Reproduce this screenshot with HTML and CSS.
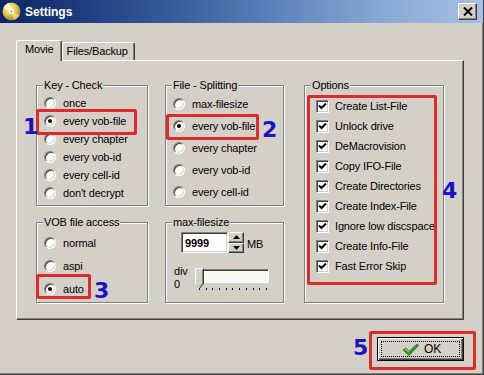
FILE: index.html
```html
<!DOCTYPE html>
<html>
<head>
<meta charset="utf-8">
<link rel="stylesheet" href="styles.css">
</head>
<body>
<div class="window">
  <div class="titlebar">
    <svg class="app-icon" width="19" height="19" viewBox="0 0 19 19">
      <defs>
        <radialGradient id="cd" cx="0.4" cy="0.35" r="0.75">
          <stop offset="0" stop-color="#fffbe0"/>
          <stop offset="0.35" stop-color="#f0d860"/>
          <stop offset="0.75" stop-color="#b89a30"/>
          <stop offset="1" stop-color="#6a6050"/>
        </radialGradient>
      </defs>
      <circle cx="9.5" cy="9.5" r="9" fill="url(#cd)"/>
      <path d="M9.5 9.5 L1.5 6 A9 9 0 0 1 7 0.8 Z" fill="#fffce8" opacity="0.75"/>
      <path d="M9.5 9.5 L17.5 13 A9 9 0 0 1 12 18.2 Z" fill="#fff2a0" opacity="0.6"/>
      <circle cx="9.5" cy="9.5" r="2.6" fill="#fff"/>
      <circle cx="9.5" cy="9.5" r="1.1" fill="#8a8a80"/>
    </svg>
    <span class="title">Settings</span>
    <div class="close">
      <svg width="10" height="9" viewBox="0 0 10 9"><path d="M1 0.5 L9 8.5 M9 0.5 L1 8.5" stroke="#000" stroke-width="2"/></svg>
    </div>
  </div>

  <div class="client">
    <div class="tabs">
      <div class="tab active">Movie</div>
      <div class="tab">Files/Backup</div>
    </div>

    <div class="panel">
      <div class="col col-1">
        <div class="group g-key">
          <div class="legend">Key - Check</div>
          <div class="rows rows-key">
            <div class="radio"><span class="rb"></span>once</div>
            <div class="radio"><span class="rb on"></span>every vob-file</div>
            <div class="radio"><span class="rb"></span>every chapter</div>
            <div class="radio"><span class="rb"></span>every vob-id</div>
            <div class="radio"><span class="rb"></span>every cell-id</div>
            <div class="radio"><span class="rb"></span>don't decrypt</div>
          </div>
        </div>
        <div class="group g-vob">
          <div class="legend">VOB file access</div>
          <div class="rows rows-vob">
            <div class="radio"><span class="rb"></span>normal</div>
            <div class="radio"><span class="rb"></span>aspi</div>
            <div class="radio"><span class="rb on"></span>auto</div>
          </div>
        </div>
      </div>

      <div class="col col-2">
        <div class="group g-split">
          <div class="legend">File - Splitting</div>
          <div class="rows rows-split">
            <div class="radio"><span class="rb"></span>max-filesize</div>
            <div class="radio"><span class="rb on"></span>every vob-file</div>
            <div class="radio"><span class="rb"></span>every chapter</div>
            <div class="radio"><span class="rb"></span>every vob-id</div>
            <div class="radio"><span class="rb"></span>every cell-id</div>
          </div>
        </div>
        <div class="group g-size">
          <div class="legend">max-filesize</div>
          <div class="size-row">
            <div class="edit">9999</div>
            <div class="spin">
              <div class="spin-btn"><svg width="7" height="4" viewBox="0 0 7 4"><path d="M3.5 0 L7 4 L0 4 Z" fill="#000"/></svg></div>
              <div class="spin-btn"><svg width="7" height="4" viewBox="0 0 7 4"><path d="M0 0 L7 0 L3.5 4 Z" fill="#000"/></svg></div>
            </div>
            <span class="unit">MB</span>
          </div>
          <div class="slider-row">
            <div class="slider-labels"><span>div</span><span>0</span></div>
            <div class="slider">
              <div class="track"></div>
              <svg class="thumb" width="9" height="21" viewBox="0 0 9 21">
                <path d="M0.5 0.5 H8.5 V16 L4.5 20.5 L0.5 16 Z" fill="#d4d0c8"/>
                <path d="M0.5 16 V0.5 H8" stroke="#fff" fill="none"/>
                <path d="M8.5 0.5 V16 L4.5 20.5" stroke="#404040" fill="none"/>
                <path d="M7.5 1.5 V15.5 L4.5 19" stroke="#808080" fill="none"/>
              </svg>
              <div class="ticks"></div>
            </div>
          </div>
        </div>
      </div>

      <div class="col col-3">
        <div class="group g-opt">
          <div class="legend">Options</div>
          <div class="rows rows-opt">
            <div class="check"><span class="cb"><svg width="9" height="9" viewBox="0 0 9 9"><path d="M1 3.5 L3.5 6 L8 1.5" stroke="#000" stroke-width="2" fill="none"/></svg></span>Create List-File</div>
            <div class="check"><span class="cb"><svg width="9" height="9" viewBox="0 0 9 9"><path d="M1 3.5 L3.5 6 L8 1.5" stroke="#000" stroke-width="2" fill="none"/></svg></span>Unlock drive</div>
            <div class="check"><span class="cb"><svg width="9" height="9" viewBox="0 0 9 9"><path d="M1 3.5 L3.5 6 L8 1.5" stroke="#000" stroke-width="2" fill="none"/></svg></span>DeMacrovision</div>
            <div class="check"><span class="cb"><svg width="9" height="9" viewBox="0 0 9 9"><path d="M1 3.5 L3.5 6 L8 1.5" stroke="#000" stroke-width="2" fill="none"/></svg></span>Copy IFO-File</div>
            <div class="check"><span class="cb"><svg width="9" height="9" viewBox="0 0 9 9"><path d="M1 3.5 L3.5 6 L8 1.5" stroke="#000" stroke-width="2" fill="none"/></svg></span>Create Directories</div>
            <div class="check"><span class="cb"><svg width="9" height="9" viewBox="0 0 9 9"><path d="M1 3.5 L3.5 6 L8 1.5" stroke="#000" stroke-width="2" fill="none"/></svg></span>Create Index-File</div>
            <div class="check"><span class="cb"><svg width="9" height="9" viewBox="0 0 9 9"><path d="M1 3.5 L3.5 6 L8 1.5" stroke="#000" stroke-width="2" fill="none"/></svg></span>Ignore low discspace</div>
            <div class="check"><span class="cb"><svg width="9" height="9" viewBox="0 0 9 9"><path d="M1 3.5 L3.5 6 L8 1.5" stroke="#000" stroke-width="2" fill="none"/></svg></span>Create Info-File</div>
            <div class="check"><span class="cb"><svg width="9" height="9" viewBox="0 0 9 9"><path d="M1 3.5 L3.5 6 L8 1.5" stroke="#000" stroke-width="2" fill="none"/></svg></span>Fast Error Skip</div>
          </div>
        </div>
      </div>
    </div>

    <div class="footer">
      <div class="ok">
        <div class="focus">
          <svg width="17" height="13" viewBox="0 0 17 13">
            <path d="M1 7 L4 5 L7 8.5 L15 1 L16.5 2.5 L7 12.5 Z" fill="#2e9a2e" stroke="#1a6a1a" stroke-width="0.8" stroke-linejoin="round"/>
            <path d="M2.5 7 L4 6 L7 9.5" stroke="#9fe09f" stroke-width="1" fill="none"/>
          </svg>
          <span>OK</span>
        </div>
      </div>
    </div>
  </div>

  <div class="mark box-1"></div>
  <div class="mark box-2"></div>
  <div class="mark box-3"></div>
  <div class="mark box-4"></div>
  <div class="mark box-5"></div>
  <div class="num num-1">1</div>
  <div class="num num-2">2</div>
  <div class="num num-3">3</div>
  <div class="num num-4">4</div>
  <div class="num num-5">5</div>
</div>
</body>
</html>
```

FILE: styles.css
```css
* { box-sizing: border-box; }
html, body { margin: 0; padding: 0; }
body {
  width: 484px;
  height: 375px;
  overflow: hidden;
  background: #d4d0c8;
  font-family: "Liberation Sans", Arial, sans-serif;
  font-size: 11px;
  letter-spacing: -0.15px;
  color: #000;
}
.window {
  position: relative;
  width: 484px;
  height: 375px;
  background: #d4d0c8;
  border-right: 1px solid #404040;
  border-bottom: 1px solid #404040;
  box-shadow: inset -1px -1px 0 #808080;
}
.titlebar {
  height: 23px;
  display: flex;
  align-items: center;
  padding: 0 6px 0 2px;
  background: linear-gradient(90deg, #0c2565 0%, #1f3f82 18%, #3b609e 38%, #5f84bb 58%, #86a6d3 78%, #a7c1e6 100%);
}
.app-icon { flex: none; }
.title {
  margin-left: 4px;
  color: #fff;
  font-weight: bold;
  font-size: 12px;
  letter-spacing: 0;
  flex: 1;
}
.close {
  width: 19px;
  height: 17px;
  background: #d4d0c8;
  border: 1px solid;
  border-color: #fff #404040 #404040 #fff;
  box-shadow: inset -1px -1px 0 #808080;
  display: flex;
  align-items: center;
  justify-content: center;
}
.client {
  padding: 17px 19px 0 16px;
}
.tabs {
  display: flex;
  align-items: flex-end;
  height: 20px;
  position: relative;
  z-index: 1;
}
.tab {
  height: 18px;
  padding: 2px 6px 0 4px;
  border: 1px solid;
  border-color: #fff #404040 transparent #fff;
  border-bottom: none;
  box-shadow: inset -1px 0 0 #808080;
  background: #d4d0c8;
  border-radius: 2px 2px 0 0;
}
.tab.active {
  height: 21px;
  margin-bottom: -1px;
  padding: 2px 7px 0 8px;
}
.panel {
  width: 448px;
  height: 260px;
  display: flex;
  align-items: flex-start;
  padding: 24px 0 0 19px;
  border: 1px solid;
  border-color: #fff #404040 #404040 #fff;
  box-shadow: inset -1px -1px 0 #808080;
}
.col { display: flex; flex-direction: column; gap: 16px; }
.col-1 { width: 112px; margin-right: 17px; }
.col-2 { width: 119px; margin-right: 20px; }
.col-3 { width: 140px; }
.group {
  border: 1px solid #808080;
  box-shadow: inset 1px 1px 0 #fff, 1px 1px 0 #fff;
}
.g-key, .g-split { height: 121px; }
.g-vob, .g-size { height: 81px; }
.g-opt { height: 218px; }
.legend {
  width: fit-content;
  margin: -7px 0 0 6px;
  padding: 0 1px;
  line-height: 13px;
  background: #d4d0c8;
}
.rows-key { padding-top: 2px; }
.rows-key .radio { height: 18px; }
.rows-split { padding-top: 1px; }
.rows-split .radio { height: 22px; }
.rows-vob { padding-top: 2px; }
.rows-vob .radio { height: 23px; }
.rows-opt { padding-top: 4px; }
.radio {
  display: flex;
  align-items: center;
  gap: 7px;
  padding-left: 7px;
  white-space: nowrap;
}
.rb {
  flex: none;
  width: 12px;
  height: 12px;
  border-radius: 50%;
  background: #fff;
  border: 1px solid;
  border-color: #808080 #fff #fff #808080;
  box-shadow: inset 1px 1px 0 #404040, inset -1px -1px 0 #d4d0c8;
  display: flex;
  align-items: center;
  justify-content: center;
}
.rb.on::after {
  content: "";
  width: 4px;
  height: 4px;
  border-radius: 50%;
  background: #000;
}
.check {
  height: 20px;
  display: flex;
  align-items: center;
  gap: 6px;
  padding-left: 11px;
  white-space: nowrap;
}
.cb {
  flex: none;
  width: 13px;
  height: 13px;
  background: #fff;
  border: 1px solid;
  border-color: #808080 #fff #fff #808080;
  box-shadow: inset 1px 1px 0 #404040, inset -1px -1px 0 #d4d0c8;
  display: flex;
  align-items: center;
  justify-content: center;
}
.size-row {
  display: flex;
  align-items: center;
  margin: 3px 0 0 15px;
  height: 21px;
}
.edit {
  width: 47px;
  height: 21px;
  background: #fff;
  border: 1px solid;
  border-color: #808080 #fff #fff #808080;
  box-shadow: inset 1px 1px 0 #404040, inset -1px -1px 0 #d4d0c8;
  font-weight: bold;
  font-size: 11px;
  padding: 4px 0 0 3px;
}
.spin {
  width: 16px;
  height: 21px;
  display: flex;
  flex-direction: column;
}
.spin-btn {
  flex: 1;
  border: 1px solid;
  border-color: #fff #404040 #404040 #fff;
  box-shadow: inset -1px -1px 0 #808080;
  display: flex;
  align-items: center;
  justify-content: center;
}
.unit { margin-left: 3px; margin-top: 2px; }
.slider-row {
  display: flex;
  margin: 12px 0 0 8px;
}
.slider-labels {
  width: 22px;
  display: flex;
  flex-direction: column;
  line-height: 13px;
}
.slider {
  position: relative;
  margin-top: 4px;
  width: 74px;
}
.track {
  width: 73px;
  height: 14px;
  background: #f8f8f4;
  border: 1px solid;
  border-color: #808080 #fff #fff #808080;
  box-shadow: inset 1px 1px 0 #404040;
}
.thumb {
  position: absolute;
  left: -1px;
  top: -1px;
}
.ticks {
  margin: 5px 0 0 3px;
  width: 68px;
  height: 2px;
  background: repeating-linear-gradient(90deg, #000 0 1px, transparent 1px 6.7px);
}
.footer {
  display: flex;
  justify-content: flex-end;
  padding-top: 17px;
}
.ok {
  width: 87px;
  height: 24px;
  border: 1px solid #000;
  background: #d4d0c8;
  box-shadow: inset 1px 1px 0 #fff, inset -1px -1px 0 #404040, inset -2px -2px 0 #808080;
  padding: 3px;
}
.focus {
  height: 100%;
  border: 1px dotted #000;
  display: flex;
  align-items: center;
  justify-content: center;
  gap: 5px;
  padding-left: 2px;
}
.focus span { font-size: 12px; }
.mark {
  position: absolute;
  border: 3px solid #dd2a2a;
  border-radius: 2px;
}
.box-1 { left: 36px; top: 109px; width: 101px; height: 26px; }
.box-2 { left: 166px; top: 114px; width: 93px; height: 26px; }
.box-3 { left: 36px; top: 274px; width: 55px; height: 25px; }
.box-4 { left: 307px; top: 95px; width: 130px; height: 190px; }
.box-5 { left: 369px; top: 331px; width: 107px; height: 39px; }
.num {
  position: absolute;
  font-family: "DejaVu Sans", sans-serif;
  font-weight: bold;
  font-size: 22px;
  line-height: 22px;
  letter-spacing: 0;
  color: #1515c8;
}
.num-1 { left: 23px; top: 116px; }
.num-2 { left: 262px; top: 119px; }
.num-3 { left: 94px; top: 280px; }
.num-4 { left: 442px; top: 180px; }
.num-5 { left: 353px; top: 337px; }
```
